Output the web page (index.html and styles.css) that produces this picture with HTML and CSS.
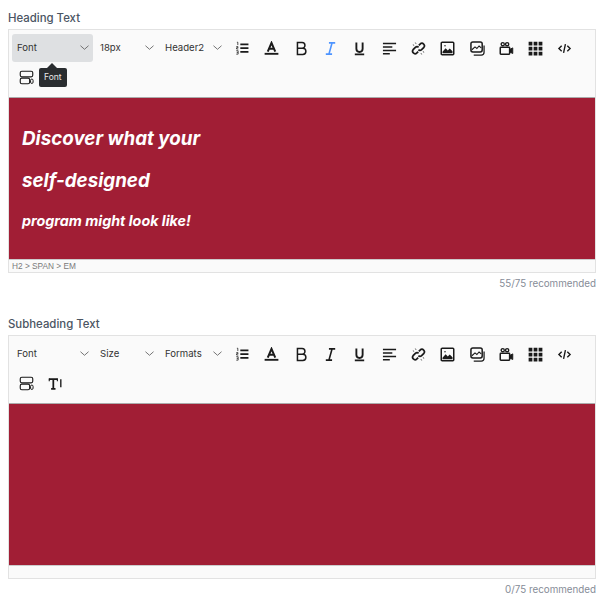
FILE: index.html

```html
<!DOCTYPE html>
<html lang="en">
<head>
    <meta charset="UTF-8">
    <meta name="viewport" content="width=device-width, initial-scale=1.0">
    <title>Editor fields</title>
    <link rel="stylesheet" href="styles.css">
</head>
<body>
    <!-- shared toolbar icons -->
    <svg class="icon-defs" aria-hidden="true">
        <symbol id="i-numlist" viewBox="0 0 24 24">
            <path d="M8.500 5.500h13M8.500 11.500h13M8.500 17.500h13" fill="none" stroke="currentColor" stroke-width="2.800"/>
            <path d="M3 2h1.500v4.500M2 9h2.800v1.800H2.500v2h2.800M2 15.500h3v5.500H2M2.700 18.200h2.300" fill="none" stroke="currentColor" stroke-width="1.200"/>
        </symbol>
        <symbol id="i-color" viewBox="0 0 24 24">
            <path d="M6 17 12 3l6 14M8.200 12.500h7.600" fill="none" stroke="currentColor" stroke-width="3.200"/>
            <rect x="1" y="19" width="22" height="3" fill="currentColor"/>
        </symbol>
        <symbol id="i-bold" viewBox="0 0 24 24">
            <path d="M5.500 2.500h7.500a4.400 4.400 0 0 1 0 9H5.500zM5.500 11.500h8.500a5 5 0 0 1 0 10H5.500z" fill="none" stroke="currentColor" stroke-width="2.400"/>
        </symbol>
        <symbol id="i-italic" viewBox="0 0 24 24">
            <path d="M9.500 3h10M4.500 21h10M14.500 3l-5 18" fill="none" stroke="currentColor" stroke-width="2.600"/>
        </symbol>
        <symbol id="i-underline" viewBox="0 0 24 24">
            <path d="M7 2.500v10a5 5 0 0 0 10 0v-10" fill="none" stroke="currentColor" stroke-width="3"/>
            <rect x="4.500" y="20" width="15" height="2.800" fill="currentColor"/>
        </symbol>
        <symbol id="i-align" viewBox="0 0 24 24">
            <path d="M1.500 4h21M1.500 9.500h15M1.500 15h21M1.500 20.500h11" fill="none" stroke="currentColor" stroke-width="2.400"/>
        </symbol>
        <symbol id="i-link" viewBox="0 0 24 24">
            <path d="M12.500 7l2.500-2.500a4 4 0 0 1 5.600 5.600l-3.600 3.600a4 4 0 0 1-5.200.4M11.500 17l-2.500 2.500a4 4 0 0 1-5.600-5.600L7 10.300a4 4 0 0 1 5.200-.4" fill="none" stroke="currentColor" stroke-width="2.800"/>
            <path d="M3 6l2 1M7 2.500l1 2M21 18l-2-1M17 21.500l-1-2" fill="none" stroke="currentColor" stroke-width="1.200"/>
        </symbol>
        <symbol id="i-image" viewBox="0 0 24 24">
            <rect x="2" y="2" width="20" height="20" rx="1.500" fill="none" stroke="currentColor" stroke-width="2.400"/>
            <path d="M4 17l5-5.500 3.500 3.500 3-3 4.500 4.500v3H4z" fill="currentColor"/>
            <circle cx="8" cy="7.500" r="1.200" fill="currentColor"/>
        </symbol>
        <symbol id="i-gallery" viewBox="0 0 24 24">
            <rect x="1.500" y="1.500" width="18" height="16" rx="3" fill="none" stroke="currentColor" stroke-width="2.400"/>
            <path d="M22.500 7v11a4.500 4.500 0 0 1-4.500 4.500H6" fill="none" stroke="currentColor" stroke-width="2"/>
            <path d="M3 14 8 9.500l3 2.500 3.500-4 3.500 3" fill="none" stroke="currentColor" stroke-width="1.800"/>
        </symbol>
        <symbol id="i-video" viewBox="0 0 24 24">
            <circle cx="6" cy="5" r="2.500" fill="none" stroke="currentColor" stroke-width="2.200"/>
            <circle cx="13" cy="5" r="2.500" fill="none" stroke="currentColor" stroke-width="2.200"/>
            <rect x="2" y="10" width="15" height="11" rx="1" fill="none" stroke="currentColor" stroke-width="2.400"/>
            <path d="M17 13.500l5-2.500v9l-5-2.500z" fill="currentColor" stroke="currentColor" stroke-width="1.500"/>
        </symbol>
        <symbol id="i-table" viewBox="0 0 24 24">
            <path d="M1 1h6v6H1zM9 1h6v6H9zM17 1h6v6h-6zM1 9h6v6H1zM9 9h6v6H9zM17 9h6v6h-6zM1 17h6v6H1zM9 17h6v6H9zM17 17h6v6h-6z" fill="currentColor"/>
        </symbol>
        <symbol id="i-code" viewBox="0 0 24 24">
            <path d="M7.500 7.500 3 12l4.500 4.500M16.500 7.500 21 12l-4.500 4.500M13.500 5l-3 14" fill="none" stroke="currentColor" stroke-width="2.200"/>
        </symbol>
        <symbol id="i-template" viewBox="0 0 24 24">
            <rect x="2" y="2" width="20" height="9" rx="2.500" fill="none" stroke="currentColor" stroke-width="1.800"/>
            <rect x="2" y="13" width="15" height="9" rx="2.500" fill="none" stroke="currentColor" stroke-width="1.800"/>
            <rect x="18.500" y="14.500" width="4" height="7" rx="2" fill="none" stroke="currentColor" stroke-width="1.600"/>
        </symbol>
        <symbol id="i-lineheight" viewBox="0 0 24 24">
            <path d="M1.500 5h14M8.500 5v15.500M5 20.500h7" fill="none" stroke="currentColor" stroke-width="2.800"/>
            <path d="M2 4v4.500M15 4v4.500" fill="none" stroke="currentColor" stroke-width="1.800"/>
            <path d="M20.500 5v13" fill="none" stroke="currentColor" stroke-width="2.200"/>
        </symbol>
        <symbol id="i-chevron" viewBox="0 0 10 10">
            <path d="M.5 3 5 7l4.500-4" fill="none" stroke="currentColor" stroke-width="1"/>
        </symbol>
    </svg>

    <section class="field">
        <label class="field-label">Heading Text</label>
        <div class="editor">
            <div class="toolbar">
                <div class="select select-font is-open">Font<svg class="chevron"><use href="#i-chevron"/></svg></div>
                <div class="select select-size">18px<svg class="chevron"><use href="#i-chevron"/></svg></div>
                <div class="select select-format">Header2<svg class="chevron"><use href="#i-chevron"/></svg></div>
                <button class="tool"><svg><use href="#i-numlist"/></svg></button>
                <button class="tool"><svg><use href="#i-color"/></svg></button>
                <button class="tool"><svg><use href="#i-bold"/></svg></button>
                <button class="tool is-active"><svg><use href="#i-italic"/></svg></button>
                <button class="tool"><svg><use href="#i-underline"/></svg></button>
                <button class="tool"><svg><use href="#i-align"/></svg></button>
                <button class="tool"><svg><use href="#i-link"/></svg></button>
                <button class="tool"><svg><use href="#i-image"/></svg></button>
                <button class="tool"><svg><use href="#i-gallery"/></svg></button>
                <button class="tool"><svg><use href="#i-video"/></svg></button>
                <button class="tool"><svg><use href="#i-table"/></svg></button>
                <button class="tool"><svg><use href="#i-code"/></svg></button>
                <button class="tool"><svg><use href="#i-template"/></svg></button>
                <div class="tooltip">Font</div>
            </div>
            <div class="content">
                <h2><em>Discover what your</em></h2>
                <h2><em>self-designed</em></h2>
                <p><em>program might look like!</em></p>
            </div>
            <div class="statusbar">H2 &gt; SPAN &gt; EM</div>
        </div>
        <div class="counter">55/75 recommended</div>
    </section>

    <section class="field">
        <label class="field-label">Subheading Text</label>
        <div class="editor">
            <div class="toolbar">
                <div class="select select-font">Font<svg class="chevron"><use href="#i-chevron"/></svg></div>
                <div class="select select-size">Size<svg class="chevron"><use href="#i-chevron"/></svg></div>
                <div class="select select-format">Formats<svg class="chevron"><use href="#i-chevron"/></svg></div>
                <button class="tool"><svg><use href="#i-numlist"/></svg></button>
                <button class="tool"><svg><use href="#i-color"/></svg></button>
                <button class="tool"><svg><use href="#i-bold"/></svg></button>
                <button class="tool"><svg><use href="#i-italic"/></svg></button>
                <button class="tool"><svg><use href="#i-underline"/></svg></button>
                <button class="tool"><svg><use href="#i-align"/></svg></button>
                <button class="tool"><svg><use href="#i-link"/></svg></button>
                <button class="tool"><svg><use href="#i-image"/></svg></button>
                <button class="tool"><svg><use href="#i-gallery"/></svg></button>
                <button class="tool"><svg><use href="#i-video"/></svg></button>
                <button class="tool"><svg><use href="#i-table"/></svg></button>
                <button class="tool"><svg><use href="#i-code"/></svg></button>
                <button class="tool"><svg><use href="#i-template"/></svg></button>
                <button class="tool"><svg><use href="#i-lineheight"/></svg></button>
            </div>
            <div class="content"></div>
            <div class="statusbar"></div>
        </div>
        <div class="counter">0/75 recommended</div>
    </section>
</body>
</html>
```

FILE: styles.css

```css
* {
    box-sizing: border-box;
    margin: 0;
    padding: 0;
    font-family: 'Inter', 'Liberation Sans', sans-serif;
}

body {
    background: #fff;
    padding: 11px 10px 0 8px;
}

.icon-defs {
    display: none;
}

.field {
    margin-bottom: 26px;
}

.field-label {
    display: block;
    height: 18px;
    line-height: 14px;
    font-size: 11.4px;
    font-weight: 500;
    color: #4b5563;
}

.editor {
    border: 1px solid #e2e2e2;
    background: #fafafa;
}

.toolbar {
    position: relative;
    display: flex;
    flex-wrap: wrap;
    align-content: flex-start;
    height: 68px;
    padding: 4px 3px 0;
    border-bottom: 1px solid #ababab;
    color: #1a1a1a;
}

.select {
    display: flex;
    align-items: center;
    justify-content: space-between;
    height: 28px;
    margin-bottom: 1px;
    padding: 0 6px 1px 5px;
    border-radius: 3px;
    font-size: 9.6px;
    color: #333;
}

.select-font {
    width: 81px;
    padding-right: 4px;
}

.select-size {
    width: 65px;
    margin-left: 2px;
}

.select-format {
    width: 68px;
}

.select.is-open {
    background: #dee0e2;
}

.chevron {
    width: 9px;
    height: 9px;
    color: #666;
}

.tool {
    display: flex;
    align-items: center;
    justify-content: center;
    width: 29.3px;
    height: 28px;
    margin-bottom: 1px;
    border: none;
    background: none;
    color: #1a1a1a;
}

.tool svg {
    width: 15px;
    height: 15px;
}

.tool.is-active {
    color: #4d94ff;
}

.tooltip {
    position: absolute;
    left: 30px;
    top: 38px;
    padding: 0 5px;
    height: 19px;
    line-height: 19px;
    border-radius: 2px;
    background: #2a2d30;
    color: #e8e8e8;
    font-size: 8.5px;
}

.tooltip::before {
    content: '';
    position: absolute;
    left: 8px;
    top: -5px;
    border-left: 5px solid transparent;
    border-right: 5px solid transparent;
    border-bottom: 5px solid #2a2d30;
}

.content {
    height: 161px;
    padding: 27px 13px 0;
    background: #a11e35;
    color: #fff;
}

.content h2,
.content p {
    font-weight: 700;
}

.content h2 {
    font-size: 18.8px;
    line-height: 28px;
    margin-bottom: 14px;
}

.content p {
    margin-top: 15px;
    font-size: 14.3px;
    line-height: 22px;
}

.statusbar {
    height: 13px;
    padding: 0 3px;
    border-top: 1px solid #ccc;
    font-family: 'Liberation Sans', sans-serif;
    line-height: 12px;
    font-size: 8.3px;
    color: #7a7a7a;
}

.counter {
    margin-top: 4px;
    text-align: right;
    font-size: 9.8px;
    line-height: 14px;
    color: #868c97;
}
```
